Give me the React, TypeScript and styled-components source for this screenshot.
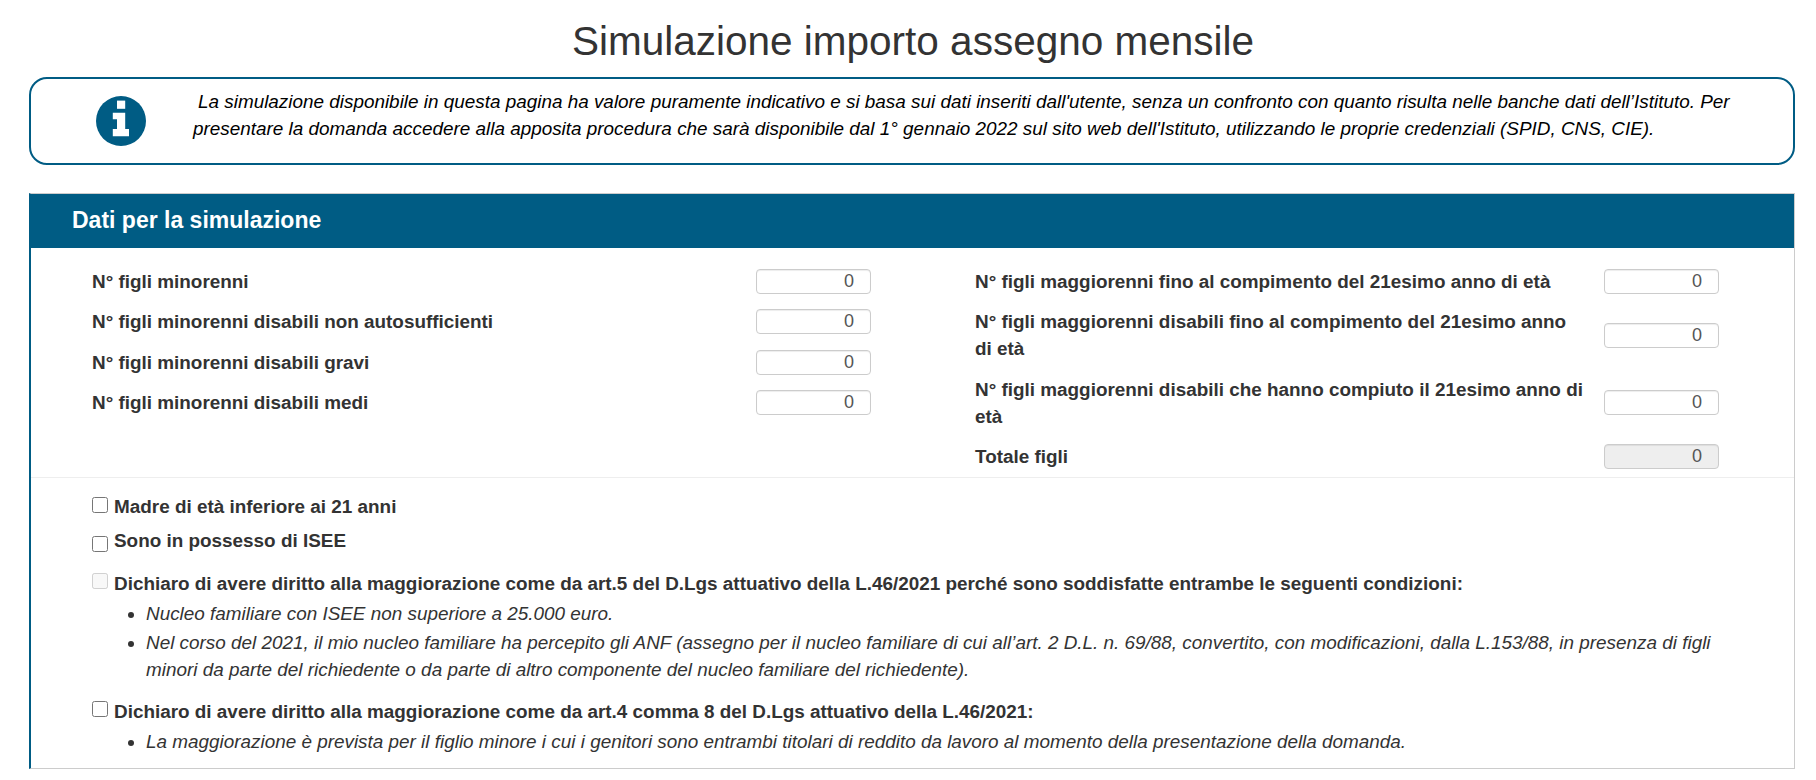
import React from 'react'
import styled, { createGlobalStyle } from 'styled-components'

const BLUE = '#005c84'

const GlobalStyle = createGlobalStyle`
    html, body {
        margin: 0;
        padding: 0;
        background: #fff;
        color: #333;
        font-family: "Liberation Sans", Arial, sans-serif;
    }
`

const leftFields = [
    'N° figli minorenni',
    'N° figli minorenni disabili non autosufficienti',
    'N° figli minorenni disabili gravi',
    'N° figli minorenni disabili medi',
]

const rightFields = [
    'N° figli maggiorenni fino al compimento del 21esimo anno di età',
    'N° figli maggiorenni disabili fino al compimento del 21esimo anno di età',
    'N° figli maggiorenni disabili che hanno compiuto il 21esimo anno di età',
]

const Field: React.FC<{ label: string; disabled?: boolean }> = ({ label, disabled }) => (
    <FieldRow>
        <FieldLabel>{label}</FieldLabel>
        <NumberInput type="text" value="0" readOnly disabled={disabled} />
    </FieldRow>
)

const InfoGlyph = () => (
    <svg width="50" height="50" viewBox="0 0 50 50">
        <circle cx="25" cy="25" r="25" fill={BLUE} />
        <rect x="21" y="4.6" width="8.2" height="8.2" fill="#fff" />
        <path d="M16.8 16.7H29.2V33H33V40.2H16.8V33H21V23.2H16.8z" fill="#fff" />
    </svg>
)

export default function App() {
    return (
        <Page>
            <GlobalStyle />
            <Title>Simulazione importo assegno mensile</Title>
            <InfoBox>
                <InfoIcon>
                    <InfoGlyph />
                </InfoIcon>
                <InfoText>
                    <Lead>La simulazione disponibile in questa pagina ha valore puramente indicativo e si basa sui dati inseriti dall'utente, senza un confronto con quanto risulta nelle banche dati dell’Istituto. Per </Lead>
                    presentare la domanda accedere alla apposita procedura che sarà disponibile dal 1° gennaio 2022 sul sito web dell'Istituto, utilizzando le proprie credenziali (SPID, CNS, CIE).
                </InfoText>
            </InfoBox>
            <Panel>
                <PanelHeader>Dati per la simulazione</PanelHeader>
                <FieldGrid>
                    <FieldColumn>
                        {leftFields.map(label => <Field key={label} label={label} />)}
                    </FieldColumn>
                    <FieldColumn>
                        {rightFields.map(label => <Field key={label} label={label} />)}
                        <Field label="Totale figli" disabled />
                    </FieldColumn>
                </FieldGrid>
                <Options>
                    <CheckRow $gap={7}>
                        <CheckBox type="checkbox" $top={4} />
                        <CheckLabel>Madre di età inferiore ai 21 anni</CheckLabel>
                    </CheckRow>
                    <CheckRow $gap={16}>
                        <CheckBox type="checkbox" $top={9} />
                        <CheckLabel>Sono in possesso di ISEE</CheckLabel>
                    </CheckRow>
                    <CheckRow>
                        <CheckBox type="checkbox" $top={3} disabled />
                        <CheckLabel>Dichiaro di avere diritto alla maggiorazione come da art.5 del D.Lgs attuativo della L.46/2021 perché sono soddisfatte entrambe le seguenti condizioni:</CheckLabel>
                    </CheckRow>
                    <Notes $gap={15}>
                        <li>Nucleo familiare con ISEE non superiore a 25.000 euro.</li>
                        <li>Nel corso del 2021, il mio nucleo familiare ha percepito gli ANF (assegno per il nucleo familiare di cui all’art. 2 D.L. n. 69/88, convertito, con modificazioni, dalla L.153/88, in presenza di figli minori da parte del richiedente o da parte di altro componente del nucleo familiare del richiedente).</li>
                    </Notes>
                    <CheckRow>
                        <CheckBox type="checkbox" $top={3} />
                        <CheckLabel>Dichiaro di avere diritto alla maggiorazione come da art.4 comma 8 del D.Lgs attuativo della L.46/2021:</CheckLabel>
                    </CheckRow>
                    <Notes>
                        <li>La maggiorazione è prevista per il figlio minore i cui i genitori sono entrambi titolari di reddito da lavoro al momento della presentazione della domanda.</li>
                    </Notes>
                </Options>
            </Panel>
        </Page>
    )
}

const Page = styled.div`
    width: 1766px;
    margin-left: 29px;
    padding-bottom: 12px;
`
const Title = styled.h1`
    height: 77px;
    margin: 0;
    padding: 20px 0 0 2px;
    box-sizing: border-box;
    font-size: 40.5px;
    line-height: 42px;
    font-weight: 400;
    text-align: center;
    color: #333;
`
const InfoBox = styled.div`
    display: flex;
    height: 88px;
    box-sizing: border-box;
    border: 2px solid ${BLUE};
    border-radius: 18px;
`
const InfoIcon = styled.div`
    flex: 0 0 162px;
    display: flex;
    justify-content: center;
    align-items: center;
    padding: 0 0 0 18px;
    box-sizing: border-box;
`
const InfoText = styled.div`
    flex: 1;
    padding: 10px 40px 0 0;
    font-size: 18.9px;
    line-height: 26.5px;
    font-style: italic;
    color: #000;
`
const Lead = styled.span`
    padding-left: 5px;
`
const Panel = styled.section`
    margin-top: 28px;
    border: 1px solid #ccc;
    border-left: 2px solid ${BLUE};
`
const PanelHeader = styled.h2`
    height: 54px;
    margin: 0;
    padding-left: 41px;
    background: ${BLUE};
    color: #fff;
    font-size: 23px;
    line-height: 52px;
    font-weight: 700;
`
const FieldGrid = styled.div`
    display: grid;
    grid-template-columns: 779px 744px;
    column-gap: 104px;
    padding: 13px 0 0 61px;
    border-bottom: 1px solid #eee;
`
const FieldColumn = styled.div`
    display: flex;
    flex-direction: column;
`
const FieldRow = styled.div`
    display: flex;
    align-items: center;
    justify-content: space-between;
    padding: 6.75px 0;
`
const FieldLabel = styled.label`
    width: 608px;
    font-size: 18.9px;
    line-height: 27px;
    font-weight: 700;
    color: #333;
`
const NumberInput = styled.input`
    width: 115px;
    height: 25px;
    box-sizing: border-box;
    padding: 0 16px 0 12px;
    border: 1px solid #ccc;
    border-radius: 4px;
    box-shadow: inset 0 1px 1px rgba(0, 0, 0, 0.075);
    background: ${props => (props.disabled ? '#eee' : '#fff')};
    color: #555;
    font-family: inherit;
    font-size: 18px;
    text-align: right;
`
const Options = styled.div`
    padding: 15px 40px 13px 61px;
`
const CheckRow = styled.div<{ $gap?: number }>`
    display: flex;
    align-items: flex-start;
    margin-bottom: ${props => props.$gap ?? 3}px;
`
const CheckBox = styled.input<{ $top: number }>`
    flex: none;
    width: 16px;
    height: 16px;
    margin: ${props => props.$top}px 6px 0 0;
`
const CheckLabel = styled.label`
    font-size: 18.9px;
    line-height: 27px;
    font-weight: 700;
    color: #333;
`
const Notes = styled.ul<{ $gap?: number }>`
    margin: 0 0 ${props => props.$gap ?? 0}px;
    padding-left: 54px;
    font-size: 18.9px;
    line-height: 27px;
    font-style: italic;
    color: #333;

    li + li {
        margin-top: 2px;
    }
`
